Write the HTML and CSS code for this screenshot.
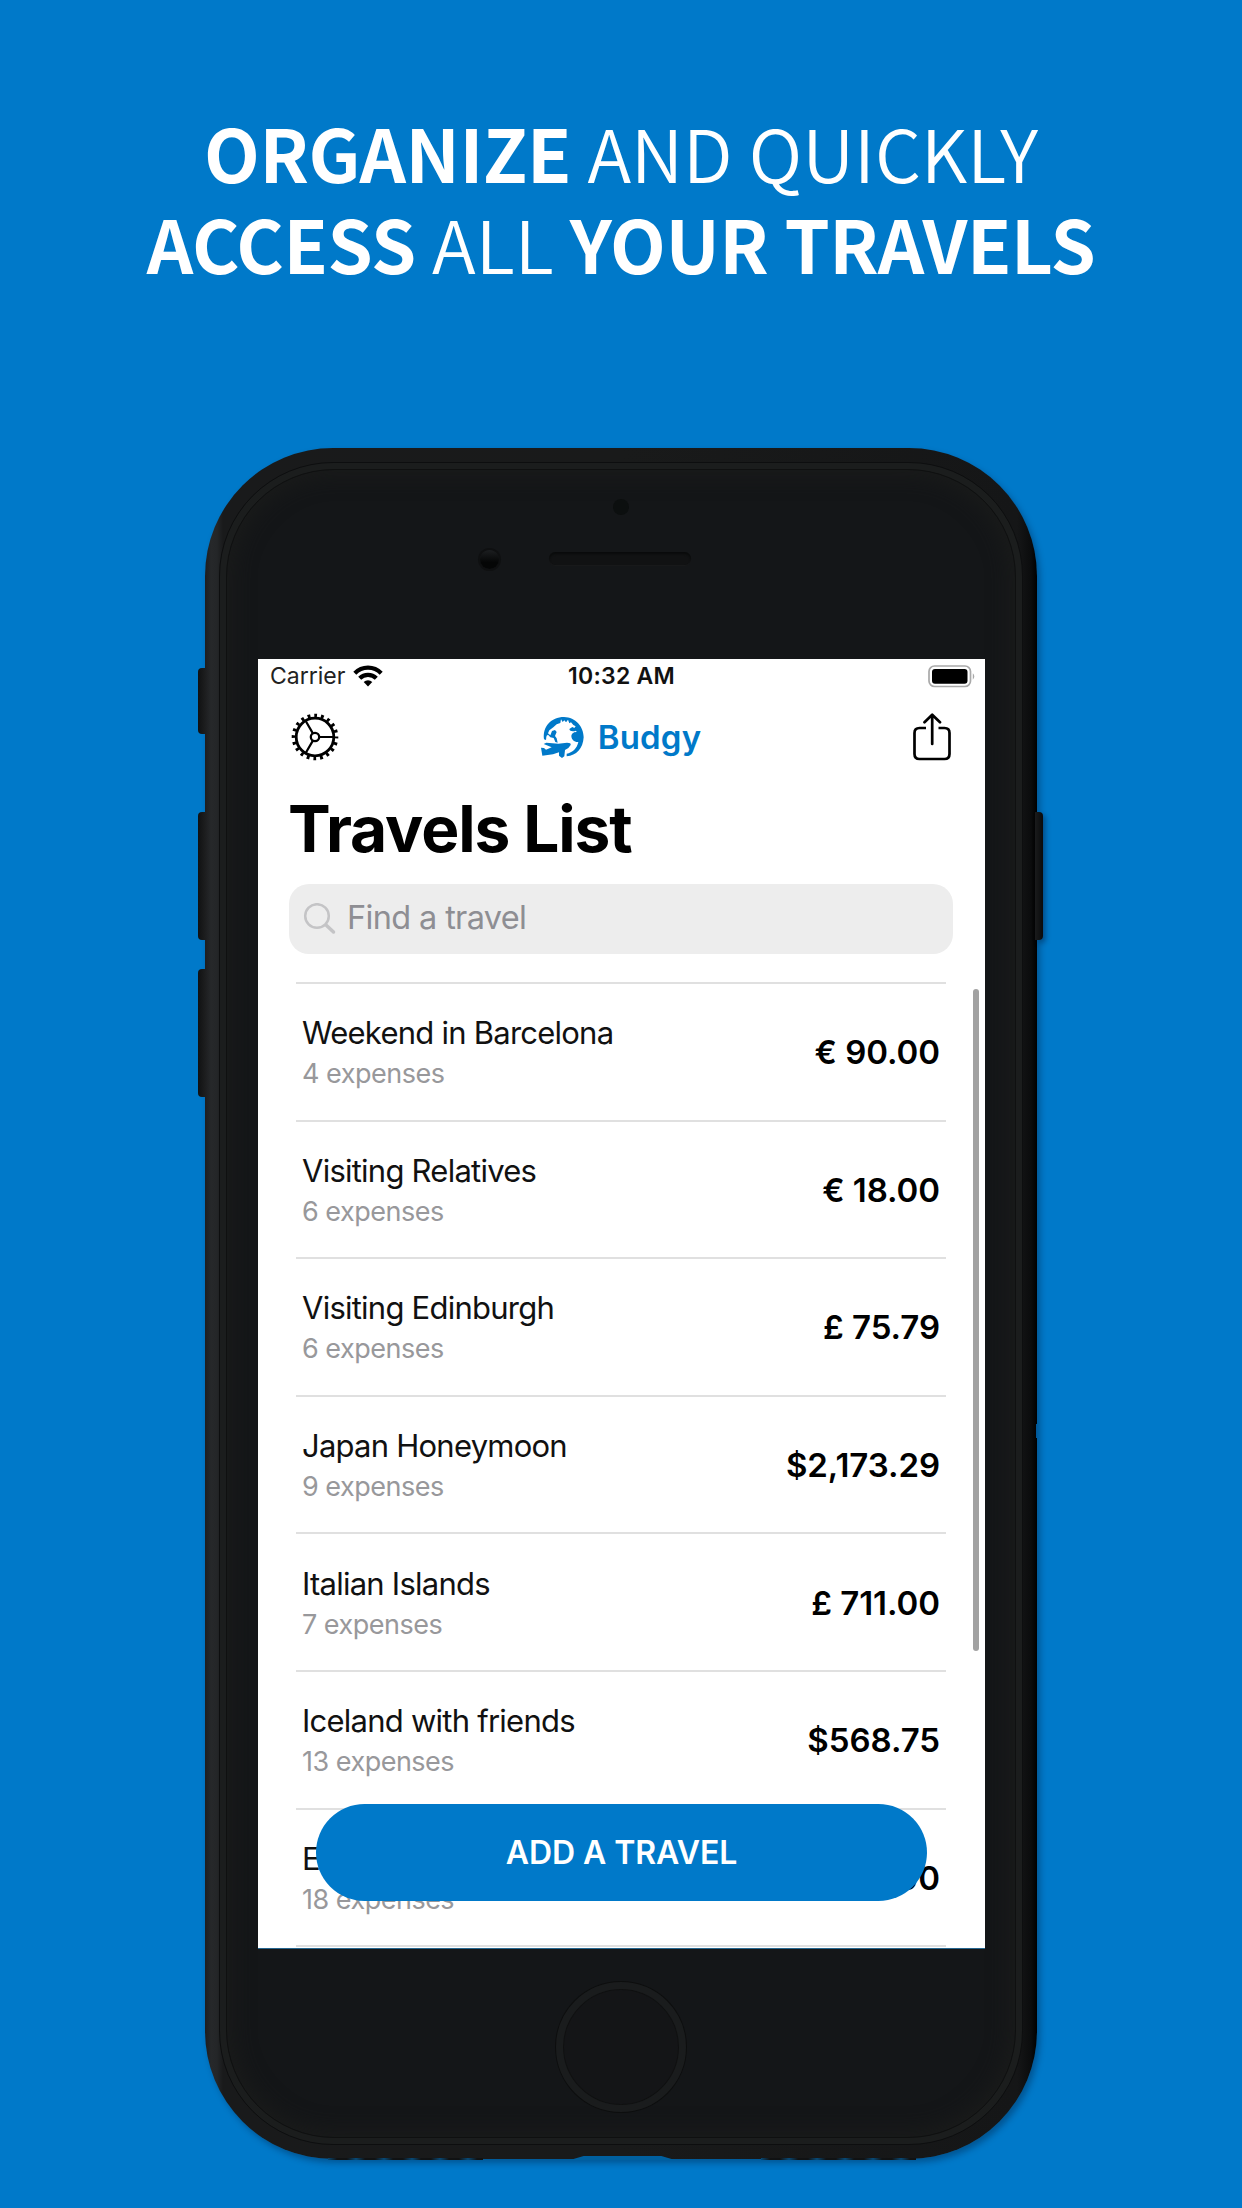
FILE: index.html
```html
<!DOCTYPE html>
<html lang="en">
<head>
<meta charset="utf-8">
<title>Budgy</title>
<link rel="stylesheet" href="styles.css">
</head>
<body>
<h1 class="headline"><span class="line"><b>ORGANIZE</b> AND QUICKLY</span><span class="line"><b>ACCESS</b> ALL <b>YOUR TRAVELS</b></span></h1>
<main class="phone">
  <i class="key mute"></i><i class="key up"></i><i class="key down"></i><i class="key power"></i>
  <i class="grille left"></i><i class="port"></i><i class="grille right"></i><i class="nick"></i>
  <div class="face"></div>
  <div class="top">
    <i class="camera"></i>
    <div class="ear"><i class="sensor"></i><i class="speaker"></i></div>
  </div>
  <section class="screen">
    <div class="status">
      <div class="carrier"><span>Carrier</span>
        <svg width="30" height="22" viewBox="0 0 30 22"><g fill="none" stroke="#000" stroke-width="4.2"><path d="M1.8 8.2a18.6 18.6 0 0 1 26.400 0"/><path d="M6.700 13.300a11.700 11.700 0 0 1 16.600 0"/></g><path d="M15 21.500l-4.300-4.400a6.200 6.200 0 0 1 8.600 0z"/></svg>
      </div>
      <span class="time">10:32 AM</span>
      <svg class="battery" width="48" height="23" viewBox="0 0 48 23"><rect x="1" y="1" width="41.500" height="20.500" rx="5.500" fill="none" stroke="#a9a9a9" stroke-width="1.700"/><rect x="4" y="4" width="35.500" height="14.800" rx="3"/><path d="M44.800 8.200q3 3 0 6.600z" fill="#a9a9a9"/></svg>
    </div>
    <nav class="nav">
      <svg width="48" height="48" viewBox="-24 -24 48 48" fill="none" stroke="#000"><circle r="18.800" stroke-width="2.800"/><circle r="21.500" stroke-width="3.600" stroke-dasharray="2.800 3.955" stroke-dashoffset="1.400"/><circle r="4.200" stroke-width="2.300"/><path d="M4.200 0H18.500M-2.100 -3.600L-9.300 -16M-2.100 3.600L-9.300 16" stroke-width="2.200"/></svg>
      <div class="brand">
        <svg width="45" height="43" viewBox="869 198 135 129" fill="#0079c9"><path d="M881 268C876 230 902 201 941 201C976 202 1000 230 1000 262C998 296 978 317 949 319L949 311C966 308 980 296 984 276C972 277 963 268 963 257C965 248 973 246 979 246L977 242C966 246 958 243 957 237L966 231L972 234L976 229L969 225L962 217L957 220L953 209L947 217L942 211L937 216L932 208L930 219L919 223L909 232L897 241L893 250L900 256L905 243L914 240L919 246L914 258L919 265L922 278L915 276L910 264L900 262L893 254L889 257C887 262 888 266 887 270Z"/><path d="M872 293L881 294L887 299L904 292L880 282L888 278L924 281L950 278Q963 278 961 285Q957 294 944 300L942 319L935 324L926 317L926 307L908 313L876 317Z"/></svg>
        <span>Budgy</span>
      </div>
      <svg width="38" height="48" viewBox="0 0 38 48" fill="none" stroke="#000" stroke-width="2.700" stroke-linecap="round" stroke-linejoin="round"><path d="M13 15H6.500Q1.500 15 1.500 20V41Q1.500 46 6.500 46H31.500Q36.500 46 36.500 41V20Q36.500 15 31.500 15H25.500" stroke-linecap="butt"/><path d="M19.200 31V2M11.500 9.300L19.200 1.700L27 9.300"/></svg>
    </nav>
    <h2 class="title">Travels List</h2>
    <div class="search">
      <svg width="33" height="33" viewBox="0 0 33 33" fill="none" stroke="#c4c4c6" stroke-width="2.500" stroke-linecap="round"><circle cx="14" cy="13" r="11.800"/><path d="M23 22L30.500 29" stroke-width="3.500"/></svg>
      <span>Find a travel</span>
    </div>
    <ul class="list">
      <li><div><p class="name">Weekend in Barcelona</p><p class="sub">4 expenses</p></div><span class="amt">€ 90.00</span></li>
      <li><div><p class="name">Visiting Relatives</p><p class="sub">6 expenses</p></div><span class="amt">€ 18.00</span></li>
      <li><div><p class="name">Visiting Edinburgh</p><p class="sub">6 expenses</p></div><span class="amt">£ 75.79</span></li>
      <li><div><p class="name">Japan Honeymoon</p><p class="sub">9 expenses</p></div><span class="amt">$2,173.29</span></li>
      <li><div><p class="name">Italian Islands</p><p class="sub">7 expenses</p></div><span class="amt">£ 711.00</span></li>
      <li><div><p class="name">Iceland with friends</p><p class="sub">13 expenses</p></div><span class="amt">$568.75</span></li>
      <li><div><p class="name">E</p><p class="sub">18 expenses</p></div><span class="amt">00</span></li>
      <li></li>
    </ul>
    <i class="scroll"></i>
    <button class="add">ADD A TRAVEL</button>
  </section>
  <div class="home"></div>
</main>
</body>
</html>
```
FILE: styles.css
```css
* { box-sizing: border-box; margin: 0; padding: 0; }
body { width: 1242px; height: 2208px; overflow: hidden; background: #0079c9; font-family: Inter, "Liberation Sans", sans-serif; color: #000; display: flex; flex-direction: column; align-items: center; }
i, svg { display: block; flex: none; }
.headline { height: 448px; padding-top: 106px; font: 350 72.500px/91px "Noto Sans CJK SC", "Noto Sans", sans-serif; color: #fff; display: flex; flex-direction: column; align-items: center; }
.line { white-space: nowrap; }
.line b { font-weight: 700; letter-spacing: -0.400px; }
.phone { position: relative; width: 832px; height: 1711px; border-radius: 128px; padding: 0 53px; display: flex; flex-direction: column; background: linear-gradient(90deg, #1c1d1f, #26282a 6px, #242628 12px, #191a1b 18px, #191a1a 50%, #151617 812px, #0b0c0d 826px, #000); box-shadow: 3px 4px 6px rgba(0,20,50,.35); }
.face { position: absolute; inset: 14px 14px 14px 14px; border-radius: 114px; border: 1px solid #0d0e0f; background: #1b1d1d; }
.face::after { content: ""; position: absolute; inset: 6px; border-radius: 108px; border: 1px solid #0f1010; background: #141618; box-shadow: inset 0 0 22px 4px #1b1c1b; }
.key { position: absolute; left: -7px; width: 8px; background: linear-gradient(90deg, #101112, #1e1f20); border-radius: 4px 0 0 4px; }
.mute { top: 220px; height: 66px; }
.up { top: 364px; height: 128px; }
.down { top: 521px; height: 128px; }
.power { left: 830px; top: 364px; height: 128px; border-radius: 0 4px 4px 0; background: linear-gradient(90deg, #1a1b1c, #0a0b0c); box-shadow: 3px 3px 5px rgba(0,20,50,.35); }
.port { position: absolute; left: 365px; bottom: -1px; width: 105px; height: 4px; background: #00609f; clip-path: polygon(0 100%, 13% 0, 87% 0, 100% 100%); }
.grille { position: absolute; bottom: -1px; width: 155px; height: 2px; background: repeating-linear-gradient(90deg, #064a78 0, #101213 9px 19px, #064a78 28px); }
.grille.left { left: 123px; }
.grille.right { left: 556px; }
.nick { position: absolute; right: 0; top: 976px; width: 1px; height: 14px; background: #00589a; }
.top { position: relative; height: 211px; padding-top: 51px; display: flex; flex-direction: column; align-items: center; gap: 35px; }
.camera { width: 16px; height: 16px; border-radius: 50%; background: #0c0f0f; }
.ear { width: 100%; display: flex; align-items: center; padding-left: 222px; gap: 50px; }
.sensor { width: 19px; height: 19px; border-radius: 50%; background: linear-gradient(#1c1e20, #050606 65%); box-shadow: 0 0 0 2px #0f1011; }
.speaker { width: 142px; height: 13px; margin-top: -2px; border-radius: 7px; background: #111213; box-shadow: inset 0 2px 2px #0a0b0b, 0 1px 0 #18191a; }
.screen { position: relative; width: 727px; height: 1290px; overflow: hidden; background: #fff; border-bottom: 1px solid #24658e; }
.status { height: 35px; display: grid; grid-template-columns: 1fr auto 1fr; align-items: center; padding: 0 9px 1px 12px; font-size: 23px; line-height: 34px; }
.carrier { display: flex; align-items: center; gap: 8px; color: #222; }
.time { font-weight: 600; color: #111; letter-spacing: .250px; margin-right: 3px; }
.battery { justify-self: end; }
.nav { height: 86px; display: flex; justify-content: space-between; align-items: center; padding: 0 34px 0 33px; }
.brand { display: flex; align-items: center; gap: 13px; margin-right: 11px; color: #0079c9; font-size: 33px; font-weight: 600; line-height: 44px; letter-spacing: .200px; }
.title { height: 104px; padding: 4px 0 0 30px; font-size: 64px; line-height: 90px; font-weight: 700; letter-spacing: -1.100px; white-space: nowrap; }
.search { margin: 0 32px 0 31px; height: 70px; border-radius: 20px; background: #ededed; display: flex; align-items: center; gap: 11px; padding-left: 14px; color: #8e8e93; font-size: 32.500px; line-height: 40px; letter-spacing: -.650px; }
.search span { padding-bottom: 3px; }
.list { list-style: none; margin: 28px 39px 0 38px; }
.list li { height: 137.600px; border-top: 2px solid #e0e0e0; padding: 1px 6px 0; display: flex; align-items: center; justify-content: space-between; }
.name { font-size: 31px; line-height: 40px; color: #111; letter-spacing: -.760px; white-space: nowrap; }
.sub { margin-top: 4px; font-size: 27px; line-height: 34px; color: #98989b; letter-spacing: -.500px; }
.amt { font-size: 33px; font-weight: 600; letter-spacing: -.050px; white-space: nowrap; }
.scroll { position: absolute; left: 715px; top: 330px; width: 6px; height: 662px; border-radius: 3px; background: #a2a2a2; }
.add { position: absolute; left: 58px; top: 1145px; width: 611px; height: 97px; border: 0; border-radius: 48.500px; background: #0079c9; color: #fff; font: 600 32px/97px Inter, sans-serif; letter-spacing: -.100px; }
.home { position: relative; align-self: center; margin-top: 33px; width: 130px; height: 130px; border-radius: 50%; background: #141517; border: 7px solid #1a1c1d; box-shadow: 0 0 0 1px #0d0e0e, inset 0 0 0 1px #101111; }
```
